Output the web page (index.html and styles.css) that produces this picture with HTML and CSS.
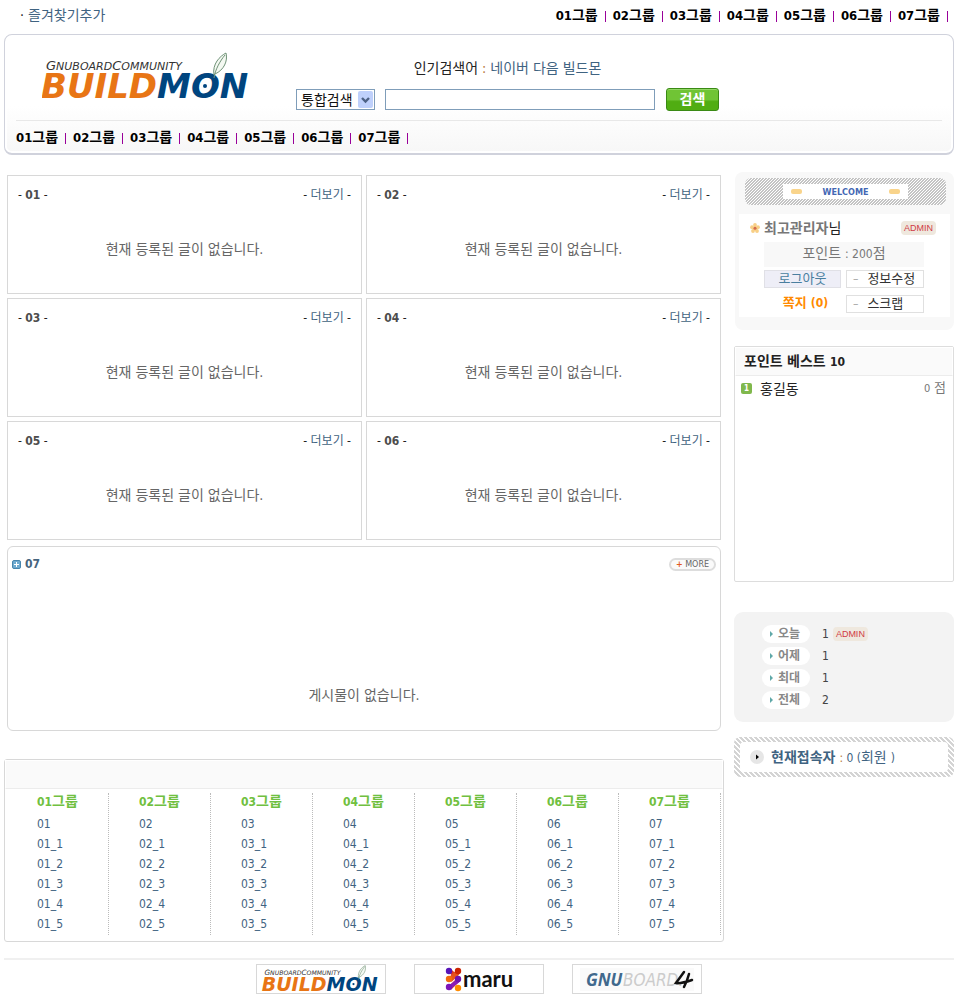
FILE: index.html
```html
<!DOCTYPE html>
<html lang="ko">
<head>
<meta charset="utf-8">
<meta name="viewport" content="width=device-width, initial-scale=1">
<title>BUILDMON</title>
<link rel="stylesheet" href="styles.css">
</head>
<body>
<div class="page">
  <div class="topbar">
    <div class="favorite"><span>·</span> <a href="#">즐겨찾기추가</a></div>
    <ul class="group-nav">
      <li><a href="#"><span class="n">01</span>그룹</a></li>
      <li><a href="#"><span class="n">02</span>그룹</a></li>
      <li><a href="#"><span class="n">03</span>그룹</a></li>
      <li><a href="#"><span class="n">04</span>그룹</a></li>
      <li><a href="#"><span class="n">05</span>그룹</a></li>
      <li><a href="#"><span class="n">06</span>그룹</a></li>
      <li><a href="#"><span class="n">07</span>그룹</a></li>
    </ul>
  </div>

  <header class="masthead">
    <div class="masthead-top">
      <a class="logo" href="#" aria-label="BUILDMON">
        <svg viewBox="0 0 210 50">
          <text class="logo-sub" x="4" y="18"><tspan class="logo-cap">G</tspan>NUBOARD<tspan class="logo-cap">C</tspan>OMMUNITY</text>
          <text class="logo-main" x="-1" y="46"><tspan class="logo-orange">BUILD</tspan><tspan class="logo-blue">MON</tspan></text>
          <path d="M172 23C170 12 178 4 184 1C186 9 182 18 173 22Z" fill="#f4f9f2" stroke="#6f9277"/>
          <path d="M172 26C173 18 178 9 183 3" fill="none" stroke="#6f9277"/>
          <circle cx="163" cy="34" r="2" fill="#00457f"/>
        </svg>
      </a>
      <div class="search">
        <p class="popular">인기검색어 <span class="colon">:</span> <a href="#">네이버</a> <a href="#">다음</a> <a href="#">빌드몬</a></p>
        <form class="search-form">
          <span class="select-box">
            <select aria-label="검색 범위"><option>통합검색</option></select>
            <svg class="arrow" viewBox="0 0 15 17"><rect width="15" height="17" rx="2" fill="#bfd0fb"/><path d="M4 7l3.500 3.500L11 7" fill="none" stroke="#4d6185" stroke-width="2.400"/></svg>
          </span>
          <input class="keyword" type="text" aria-label="검색어">
          <button class="search-btn" type="submit">검색</button>
        </form>
      </div>
    </div>
    <ul class="group-nav">
      <li><a href="#"><span class="n">01</span>그룹</a></li>
      <li><a href="#"><span class="n">02</span>그룹</a></li>
      <li><a href="#"><span class="n">03</span>그룹</a></li>
      <li><a href="#"><span class="n">04</span>그룹</a></li>
      <li><a href="#"><span class="n">05</span>그룹</a></li>
      <li><a href="#"><span class="n">06</span>그룹</a></li>
      <li><a href="#"><span class="n">07</span>그룹</a></li>
    </ul>
  </header>

  <div class="columns">
    <main>
      <div class="boards">
        <section class="board"><div class="board-head"><h2>- <b>01</b> -</h2><span>- <a href="#">더보기</a> -</span></div><p>현재 등록된 글이 없습니다.</p></section>
        <section class="board"><div class="board-head"><h2>- <b>02</b> -</h2><span>- <a href="#">더보기</a> -</span></div><p>현재 등록된 글이 없습니다.</p></section>
        <section class="board"><div class="board-head"><h2>- <b>03</b> -</h2><span>- <a href="#">더보기</a> -</span></div><p>현재 등록된 글이 없습니다.</p></section>
        <section class="board"><div class="board-head"><h2>- <b>04</b> -</h2><span>- <a href="#">더보기</a> -</span></div><p>현재 등록된 글이 없습니다.</p></section>
        <section class="board"><div class="board-head"><h2>- <b>05</b> -</h2><span>- <a href="#">더보기</a> -</span></div><p>현재 등록된 글이 없습니다.</p></section>
        <section class="board"><div class="board-head"><h2>- <b>06</b> -</h2><span>- <a href="#">더보기</a> -</span></div><p>현재 등록된 글이 없습니다.</p></section>
      </div>

      <section class="gallery">
        <div class="gallery-head">
          <svg class="plus" viewBox="0 0 9 9"><rect x=".5" y=".5" width="8" height="8" rx="1.500" fill="#6fabd0" stroke="#4785ad"/><path d="M4.500 2v5M2 4.500h5" stroke="#fff"/></svg>
          <h2>07</h2>
          <a class="more" href="#"><i>+</i> MORE</a>
        </div>
        <p>게시물이 없습니다.</p>
      </section>

      <section class="sitemap">
        <div class="sitemap-strip"></div>
        <div class="sitemap-cols">
          <div class="sitemap-col"><h3><span class="n">01</span>그룹</h3><ul><li><a href="#">01</a></li><li><a href="#">01_1</a></li><li><a href="#">01_2</a></li><li><a href="#">01_3</a></li><li><a href="#">01_4</a></li><li><a href="#">01_5</a></li></ul></div>
          <div class="sitemap-col"><h3><span class="n">02</span>그룹</h3><ul><li><a href="#">02</a></li><li><a href="#">02_1</a></li><li><a href="#">02_2</a></li><li><a href="#">02_3</a></li><li><a href="#">02_4</a></li><li><a href="#">02_5</a></li></ul></div>
          <div class="sitemap-col"><h3><span class="n">03</span>그룹</h3><ul><li><a href="#">03</a></li><li><a href="#">03_1</a></li><li><a href="#">03_2</a></li><li><a href="#">03_3</a></li><li><a href="#">03_4</a></li><li><a href="#">03_5</a></li></ul></div>
          <div class="sitemap-col"><h3><span class="n">04</span>그룹</h3><ul><li><a href="#">04</a></li><li><a href="#">04_1</a></li><li><a href="#">04_2</a></li><li><a href="#">04_3</a></li><li><a href="#">04_4</a></li><li><a href="#">04_5</a></li></ul></div>
          <div class="sitemap-col"><h3><span class="n">05</span>그룹</h3><ul><li><a href="#">05</a></li><li><a href="#">05_1</a></li><li><a href="#">05_2</a></li><li><a href="#">05_3</a></li><li><a href="#">05_4</a></li><li><a href="#">05_5</a></li></ul></div>
          <div class="sitemap-col"><h3><span class="n">06</span>그룹</h3><ul><li><a href="#">06</a></li><li><a href="#">06_1</a></li><li><a href="#">06_2</a></li><li><a href="#">06_3</a></li><li><a href="#">06_4</a></li><li><a href="#">06_5</a></li></ul></div>
          <div class="sitemap-col"><h3><span class="n">07</span>그룹</h3><ul><li><a href="#">07</a></li><li><a href="#">07_1</a></li><li><a href="#">07_2</a></li><li><a href="#">07_3</a></li><li><a href="#">07_4</a></li><li><a href="#">07_5</a></li></ul></div>
        </div>
      </section>
    </main>

    <aside>
      <section class="member">
        <div class="welcome"><div><i></i><strong>WELCOME</strong><i></i></div></div>
        <div class="member-body">
          <div class="member-name">
            <svg class="flower" viewBox="0 0 10 10"><g fill="#f8cf86"><circle cx="5" cy="2" r="1.900"/><circle cx="8" cy="4.200" r="1.900"/><circle cx="7" cy="8" r="1.900"/><circle cx="3" cy="8" r="1.900"/><circle cx="2" cy="4.200" r="1.900"/><circle cx="5" cy="5.500" r="2.500"/></g><circle cx="5" cy="5.300" r="1.500" fill="#d56a4d"/></svg>
            <span><b>최고관리자</b>님</span>
            <a class="admin" href="#">ADMIN</a>
          </div>
          <p class="point">포인트 <span class="n">: 200</span>점</p>
          <div class="member-links">
            <a class="logout" href="#">로그아웃</a>
            <a class="dash" href="#"><i>–</i>정보수정</a>
            <a class="memo" href="#">쪽지 <span class="n">(0)</span></a>
            <a class="dash" href="#"><i>–</i>스크랩</a>
          </div>
        </div>
      </section>

      <section class="best">
        <h2>포인트 베스트 <span class="n">10</span></h2>
        <div class="best-row"><span class="rank">1</span><span>홍길동</span><span class="score"><span class="s">0</span> 점</span></div>
      </section>

      <section class="visits">
        <dl>
          <dt>오늘</dt><dd>1 <a class="admin" href="#">ADMIN</a></dd>
          <dt>어제</dt><dd>1</dd>
          <dt>최대</dt><dd>1</dd>
          <dt>전체</dt><dd>2</dd>
        </dl>
      </section>

      <section class="online">
        <div>
          <svg class="play" viewBox="0 0 14 14"><circle cx="7" cy="7" r="7" fill="#e6e6e6"/><path d="M6 4.500v5l3-2.500z" fill="#000"/></svg>
          <a href="#"><b>현재접속자</b> <span class="n"><span class="colon">:</span> 0 (</span>회원 <span class="n">)</span></a>
        </div>
      </section>
    </aside>
  </div>

  <footer>
    <a href="#" aria-label="BUILDMON">
      <svg class="f-build" viewBox="0 0 210 50">
        <text class="logo-sub" x="4" y="18"><tspan class="logo-cap">G</tspan>NUBOARD<tspan class="logo-cap">C</tspan>OMMUNITY</text>
        <text class="logo-main" x="-1" y="46"><tspan class="logo-orange">BUILD</tspan><tspan class="logo-blue">MON</tspan></text>
        <path d="M172 23C170 12 178 4 184 1C186 9 182 18 173 22Z" fill="#f4f9f2" stroke="#6f9277"/>
        <path d="M172 26C173 18 178 9 183 3" fill="none" stroke="#6f9277"/>
        <circle cx="163" cy="34" r="2" fill="#00457f"/>
      </svg>
    </a>
    <a href="#" aria-label="maru"><svg viewBox="0 0 128 28">
      <path d="M35 6l9 8M44 6l-9 9M35 23l9-9" stroke="#e1391b" stroke-width="4"/><path d="M35 22l9-7M44 6l-9 8" stroke="#8b1bb4" stroke-width="4"/>
      <path d="M43 7l-8 8" stroke="#e9521a" stroke-width="5"/>
      <circle cx="34" cy="6" r="3.200" fill="#5714b8"/><circle cx="43" cy="6" r="3.200" fill="#cb2300"/><circle cx="34" cy="14" r="3.200" fill="#f26a0a"/><circle cx="43" cy="14" r="3.200" fill="#7212ae"/><circle cx="34" cy="22" r="3.200" fill="#7d14b8"/><circle cx="43" cy="23" r="3.200" fill="#ff8a00"/>
      <text class="maru" x="48" y="22">maru</text></svg></a>
    <a href="#" aria-label="GNU BOARD 4"><svg viewBox="0 0 128 28"><rect x="7" y="3" width="114" height="23" fill="#fafafa"/>
      <text class="gnu" x="13" y="21">GNU</text><text class="gboard" x="50" y="21">BOARD.</text>
      <path d="M111 7l-8 11c4 1 10-1 16-3M116 9c-1 4-3 9-5 13" fill="none" stroke="#111" stroke-width="2.500" stroke-linecap="round"/></svg></a>
  </footer>
</div>
</body>
</html>
```
FILE: styles.css
```css
* { box-sizing: border-box; }
body, h2, h3, p, ul, dl, dd { margin: 0; padding: 0; }
ul { list-style: none; }
i { font-style: normal; }
a { color: #3f6381; text-decoration: none; }
body {
  background: #fff;
  color: #222;
  font-family: "DejaVu Sans Condensed", "Noto Sans CJK KR", sans-serif;
  font-size: 14px;
  line-height: 20px;
}
.n { font-size: 12px; }
.colon { color: #b87a3c; }
.page { padding: 0 7px 0 4px; }

.topbar { display: flex; align-items: flex-start; justify-content: space-between; height: 34px; padding: 5px 6px 0 16px; }
.group-nav { display: flex; }
.group-nav li { display: flex; align-items: center; }
.group-nav a { color: #000; font-weight: bold; }
.group-nav .n { font-size: 13px; }
.group-nav li::after { content: ""; width: 1px; height: 11px; margin: 2px 7px 0; background: #909; }
.topbar .group-nav li:last-child::after { margin-right: 0; }

.masthead {
  padding: 0 11px;
  border: 1px solid #d0d2dc;
  border-bottom-width: 2px;
  border-radius: 8px;
  background: linear-gradient(#fff 60%, #f7f7f7);
  box-shadow: inset 0 0 0 2px #fff;
}
.masthead-top { display: flex; gap: 44px; padding: 17px 0 9px 26px; border-bottom: 1px solid #e8e8e8; }
.logo svg { display: block; width: 210px; height: 50px; }
.logo-sub { font: italic 11px "DejaVu Sans", sans-serif; fill: #333; }
.logo-cap { font-size: 13px; }
.logo-main { font: italic bold 34px "DejaVu Sans", sans-serif; }
.logo-orange { fill: #e87515; }
.logo-blue { fill: #00457f; }
.popular { padding: 6px 0 10px; text-align: center; }
.search-form { display: flex; align-items: center; }
.select-box { position: relative; width: 79px; height: 21px; margin-right: 10px; }
.select-box select {
  width: 100%;
  height: 100%;
  padding: 0 0 0 4px;
  border: 1px solid #7f9db9;
  background: #fff;
  appearance: none;
  color: #111;
  font: inherit;
  line-height: 18px;
}
.arrow { position: absolute; top: 2px; right: 2px; width: 15px; height: 17px; pointer-events: none; }
.keyword { width: 270px; height: 21px; border: 1px solid #7f9db9; background: #fff; }
.search-btn {
  width: 53px;
  height: 23px;
  margin-left: 11px;
  padding: 0 0 3px;
  border: 1px solid #3a8a14;
  border-radius: 3px;
  background: linear-gradient(#70c435 50%, #50ad12 60%);
  box-shadow: inset 0 1px 0 #92d766;
  color: #fff;
  font: bold 14px/18px "Noto Sans CJK KR", sans-serif;
}
.masthead .group-nav { padding: 6px 0 5px; }

.columns { display: grid; grid-template-columns: 1fr 220px; gap: 10px; margin-top: 20px; }
.boards { display: grid; grid-template-columns: 1fr 1fr; gap: 4px; margin: 0 3px; }
.board { height: 119px; padding: 9px 10px; border: 1px solid #d8d8d8; color: #666; text-align: center; }
.board-head { display: flex; justify-content: space-between; font-size: 12px; color: #222; }
.board h2 { font-size: 12px; font-weight: normal; }
.board b { color: #4d4d4d; }
.board p { padding-top: 34px; }
.gallery { height: 185px; margin: 6px 3px 28px; padding: 7px 4px; border: 1px solid #d8d8d8; border-radius: 6px; color: #666; text-align: center; }
.gallery-head { display: flex; align-items: center; gap: 4px; }
.plus { width: 9px; height: 9px; }
.gallery h2 { color: #46647d; font-size: 12px; }
.more {
  width: 47px;
  margin-left: auto;
  border: 2px solid #ddd;
  border-radius: 8px;
  background: #fafafa;
  color: #666;
  font: 8px/9px "DejaVu Sans", sans-serif;
}
.more i { color: #e25b20; font-weight: bold; }
.gallery p { padding-top: 111px; }

.sitemap { padding-bottom: 6px; border: 1px solid #d8d8d8; border-radius: 3px; }
.sitemap-strip { height: 29px; border: 1px solid #fff; border-bottom-color: #ececec; background: #fafafa; }
.sitemap-cols { display: grid; grid-template-columns: repeat(7, 1fr); padding: 4px 2px 0; }
.sitemap-col { padding: 0 0 1px 30px; border-right: 1px dotted #bbb; font-size: 12px; }
.sitemap-col h3 { padding-bottom: 4px; color: #70c040; font-size: 14px; line-height: 16px; }
.sitemap-col a { display: block; line-height: 20px; }

.member { height: 158px; margin: -3px 0 16px 1px; padding: 6px 4px; border-radius: 8px; background: #f8f8f8; }
.welcome {
  margin: 0 4px 9px 6px;
  padding: 6px 38px;
  border-radius: 6px;
  background: linear-gradient(135deg, #c4c4c4 25%, #fff 25% 50%, #c4c4c4 50% 75%, #fff 75%) 0 0 / 3px 3px;
}
.welcome div { display: flex; align-items: center; justify-content: space-between; height: 15px; padding: 0 8px; background: #fff; }
.welcome i { width: 11px; height: 5px; border-radius: 2px; background: #f9d48b; }
.welcome strong { color: #4468b4; font: bold 9px "DejaVu Sans Condensed", sans-serif; }
.member-body { height: 103px; padding: 4px 14px 0 11px; background: #fff; }
.member-name { display: flex; align-items: center; gap: 4px; height: 20px; }
.member-name b { color: #777; }
.flower { width: 10px; height: 10px; }
.admin { padding: 0 3px; border-radius: 4px; background: #efe8de; color: #d03a45; font: 9px/14px "Liberation Sans", sans-serif; }
.member-name .admin { margin-left: auto; }
.point { height: 25px; margin: 4px 12px 3px 14px; background: #f8f8f8; color: #777; line-height: 22px; text-align: center; }
.member-links { display: grid; grid-template-columns: 77px 1fr; gap: 7px 5px; margin: 0 12px 0 14px; font-size: 13px; line-height: 16px; text-align: center; }
.member-links a { height: 18px; }
.logout { border: 1px solid #e0e0e6; background: #eeeef7; color: #4a7f9f; }
.dash { display: flex; gap: 9px; padding-left: 6px; border: 1px solid #e0e0e0; color: #333; }
.dash i { color: #aaa; font-size: 12px; }
.memo { padding-left: 6px; color: #ff8a00; font-weight: bold; }

.best { height: 236px; border: 1px solid #ddd; border-radius: 2px; }
.best h2 { height: 29px; padding-left: 8px; border: 1px solid #fff; border-bottom-color: #ececec; background: #fafafa; font-size: 14px; line-height: 26px; }
.best-row { display: flex; align-items: center; padding: 2px 7px 0 6px; }
.rank { width: 11px; height: 11px; margin-right: 8px; border-radius: 2px; background: #80b84c; color: #fff; font-size: 8px; font-weight: bold; line-height: 11px; text-align: center; }
.score { margin-left: auto; color: #777; font-size: 13px; }
.s { font-size: 11px; }

.visits { margin: 30px 0 15px; padding: 13px 28px; border-radius: 9px; background: #f3f3f3; }
.visits dl { display: grid; grid-template-columns: 48px 1fr; gap: 4px 12px; line-height: 18px; }
.visits dt {
  display: flex;
  align-items: center;
  gap: 5px;
  padding-left: 8px;
  border-radius: 9px;
  background: #fff;
  color: #888;
  font-size: 12px;
  font-weight: bold;
}
.visits dt::before { content: ""; border: 3px solid transparent; border-right: 0; border-left-color: #5fa8a8; }
.visits dd { display: flex; align-items: center; gap: 4px; height: 18px; color: #444; font-size: 12px; }

.online {
  padding: 5px 6px;
  border-radius: 6px;
  background: linear-gradient(45deg, #d4d4d4 25%, #fff 25% 50%, #d4d4d4 50% 75%, #fff 75%) 0 0 / 5px 5px;
}
.online div { display: flex; align-items: center; gap: 7px; height: 30px; padding-left: 10px; border-radius: 4px; background: #fff; }
.play { width: 14px; height: 14px; }

footer { display: flex; justify-content: center; gap: 28px; margin-top: 16px; padding-top: 4px; border-top: 2px solid #f0f0f0; }
footer a { width: 130px; height: 30px; border: 1px solid #d8d8d8; }
footer svg { display: block; width: 128px; height: 28px; }
footer .f-build { padding: 0 4px; }
.maru { font: bold 22px Lato, sans-serif; fill: #111; }
.gnu { font: italic bold 17px "Open Sans", sans-serif; fill: #41698d; }
.gboard { font: italic 17px "Liberation Sans Narrow", "DejaVu Sans Condensed", sans-serif; fill: #ccc; }
```
